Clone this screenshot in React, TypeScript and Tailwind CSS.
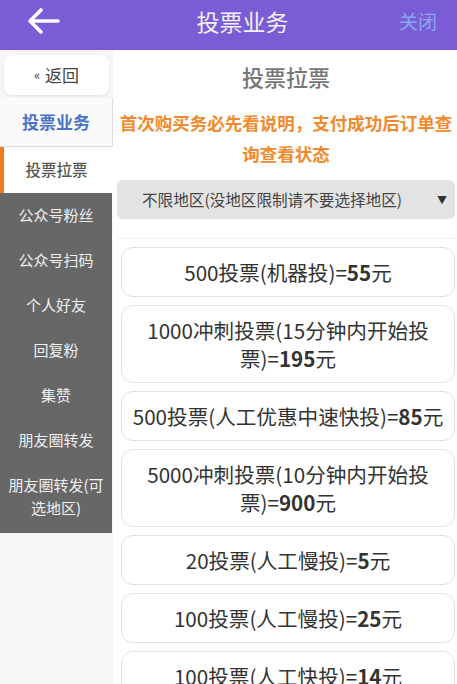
import React from 'react';

const menu = ['公众号粉丝', '公众号扫码', '个人好友', '回复粉', '集赞', '朋友圈转发'];

const items: { lines: React.ReactNode[] }[] = [
  { lines: [<>500投票(机器投)=<b>55</b>元</>] },
  { lines: [<>1000冲刺投票(15分钟内开始投</>, <>票)=<b>195</b>元</>] },
  { lines: [<>500投票(人工优惠中速快投)=<b>85</b>元</>] },
  { lines: [<>5000冲刺投票(10分钟内开始投</>, <>票)=<b>900</b>元</>] },
  { lines: [<>20投票(人工慢投)=<b>5</b>元</>] },
  { lines: [<>100投票(人工慢投)=<b>25</b>元</>] },
  { lines: [<>100投票(人工快投)=<b>14</b>元</>] },
];

export default function App() {
  return (
    <div className="w-[457px] h-[684px] overflow-hidden bg-white font-['Noto_Sans_CJK_SC',sans-serif]">
      {/* Header */}
      <div className="h-[50px] bg-[#7a5cd6] flex items-center justify-between pb-[8px] px-[26px]">
        <svg width="34" height="28" viewBox="0 0 34 28" fill="none">
          <path d="M32 14H4M15 3L4 14l11 11" stroke="#fff" strokeWidth="3.6" strokeLinecap="round" strokeLinejoin="round" />
        </svg>
        <span className="text-[23px] text-[#f2f2f2] ml-[26px]">投票业务</span>
        <span className="text-[19px] text-[#8aa8f0] -mr-[6px]">关闭</span>
      </div>

      <div className="flex">
        {/* Sidebar */}
        <div className="w-[113px] h-[634px] bg-[#f6f6f6] flex flex-col">
          <div className="mx-[4px] mt-[5px] h-[40px] rounded-lg bg-white shadow-[0_1px_3px_rgba(0,0,0,0.08)] flex items-center justify-center text-[17px] text-[#444]">
            <span className="text-[13px] mr-[5px]">«</span>返回
          </div>
          <div className="mt-[3px] h-[49px] bg-[#fafafa] border-r border-b border-[#dcdcdc] flex items-center justify-center text-[17px] font-bold text-[#4a72c8]">
            投票业务
          </div>
          <div className="h-[46px] bg-white border-l-[4px] border-[#f07a20] flex items-center justify-center text-[15.5px] font-medium text-[#555] pr-[4px]">
            投票拉票
          </div>
          <div className="w-[112px] bg-[#676767] text-[#f0f0f0] text-[15px] pb-[4px]">
            {menu.map((m) => (
              <div key={m} className="h-[45px] flex items-center justify-center">
                {m}
              </div>
            ))}
            <div className="py-[10px] text-center leading-[23px]">
              朋友圈转发(可
              <br />
              选地区)
            </div>
          </div>
        </div>

        {/* Main */}
        <div className="flex-1 pl-[4px] pr-[2px]">
          <div className="h-[52px] flex items-center justify-center text-[22px] font-medium text-[#777]">投票拉票</div>
          <div className="mt-[5px] text-center text-[17.5px] leading-[31px] font-bold text-[#f08a2c] whitespace-nowrap">
            首次购买务必先看说明，支付成功后订单查
            <br />
            询查看状态
          </div>
          <div className="mt-[11px] h-[39px] rounded-md bg-[#e3e3e3] flex items-center justify-between pl-[25px] pr-[8px] text-[15.6px] text-[#444]">
            <span>不限地区(没地区限制请不要选择地区)</span>
            <span className="text-[10px] text-[#333]">▼</span>
          </div>
          <div className="mt-[19px] border-t border-[#f0f0f0]" />
          <div className="mt-[8px] pl-[4px] flex flex-col gap-[8px]">
            {items.map((it, i) => (
              <div
                key={i}
                className="rounded-xl border border-[#e2e2e2] bg-white py-[10px] text-center text-[20.6px] leading-[28px] text-[#333] whitespace-nowrap"
              >
                {it.lines.map((l, j) => (
                  <div key={j}>{l}</div>
                ))}
              </div>
            ))}
          </div>
        </div>
      </div>
    </div>
  );
}
